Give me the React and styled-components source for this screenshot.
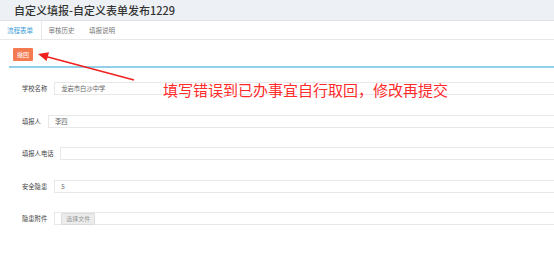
import React from 'react';
import styled, { createGlobalStyle } from 'styled-components';

const GlobalStyle = createGlobalStyle`
  html, body {
    margin: 0;
    padding: 0;
    background: #fff;
    overflow: hidden;
  }
  body {
    font-family: "Noto Sans CJK SC", "Liberation Sans", sans-serif;
  }
`;

const Page = styled.div`
  position: relative;
  width: 554px;
  height: 267px;
  background: #fff;
`;

const Header = styled.div`
  height: 21px;
  line-height: 21px;
  padding-left: 14px;
  background: #edf0f4;
  border-bottom: 1px solid #dfe3e8;
  font-size: 11px;
  font-weight: 500;
  color: #333;
  box-sizing: border-box;
`;

const Tabs = styled.div`
  display: flex;
  height: 19px;
  border-bottom: 1px solid #e8e8e8;
  box-sizing: border-box;
`;

const Tab = styled.div`
  padding: 0 7.5px 0 7px;
  line-height: 18px;
  font-size: 6.5px;
  color: ${(p) => (p.$active ? '#3a9bd6' : '#777')};
  border-right: ${(p) => (p.$active ? '1px solid #e8e8e8' : 'none')};
`;

const Content = styled.div`
  margin-left: 9px;
`;

const Toolbar = styled.div`
  padding: 8px 0 5px 4px;
`;

const OrangeButton = styled.button`
  display: block;
  height: 13px;
  width: 20px;
  padding: 0;
  border: none;
  border-radius: 1px;
  background: #f47a52;
  color: #fff;
  font-family: inherit;
  font-size: 6px;
  line-height: 13px;
`;

const Rule = styled.div`
  height: 2px;
  background: #90d0e8;
`;

const Form = styled.div`
  display: flex;
  flex-direction: column;
  gap: 19.5px;
  padding-top: 14px;
`;

const Row = styled.div`
  display: flex;
  align-items: center;
  height: 13px;
  padding-left: 13px;
`;

const Label = styled.div`
  font-size: 6.3px;
  color: #444;
  margin-right: 7px;
  white-space: nowrap;
`;

const Field = styled.div`
  flex: 1;
  display: flex;
  align-items: center;
  height: 13px;
  padding-left: 6px;
  border: 1px solid #e8e8e8;
  border-right: none;
  box-sizing: border-box;
  font-size: 6.3px;
  color: #666;
`;

const FileButton = styled.span`
  display: inline-block;
  height: 10px;
  line-height: 10px;
  padding: 0 4px;
  background: #ececec;
  border: 1px solid #dcdcdc;
  border-radius: 1px;
  color: #999;
  font-size: 6px;
`;

const Note = styled.div`
  position: absolute;
  left: 163px;
  top: 81px;
  font-size: 15px;
  line-height: 18px;
  color: #ff2b2b;
  white-space: nowrap;
`;

const Arrow = styled.svg`
  position: absolute;
  left: 0;
  top: 0;
  pointer-events: none;
`;

const rows = [
  { label: '学校名称', value: '龙岩市白沙中学' },
  { label: '填报人', value: '李四' },
  { label: '填报人电话', value: '' },
  { label: '安全隐患', value: '5' },
  { label: '隐患附件', file: true },
];

export default function App() {
  return (
    <Page>
      <GlobalStyle />
      <Header>自定义填报-自定义表单发布1229</Header>
      <Tabs>
        <Tab $active>流程表单</Tab>
        <Tab>审核历史</Tab>
        <Tab>填报说明</Tab>
      </Tabs>
      <Content>
        <Toolbar>
          <OrangeButton>撤回</OrangeButton>
        </Toolbar>
        <Rule />
        <Form>
          {rows.map((r) => (
            <Row key={r.label}>
              <Label>{r.label}</Label>
              <Field>{r.file ? <FileButton>选择文件</FileButton> : r.value}</Field>
            </Row>
          ))}
        </Form>
      </Content>
      <Note>填写错误到已办事宜自行取回，修改再提交</Note>
      <Arrow width="554" height="267" viewBox="0 0 554 267">
        <line x1="134" y1="80" x2="46" y2="56.5" stroke="#f02020" strokeWidth="1.6" />
        <polygon points="38,54 49,52.2 46.6,61" fill="#f02020" />
      </Arrow>
    </Page>
  );
}
